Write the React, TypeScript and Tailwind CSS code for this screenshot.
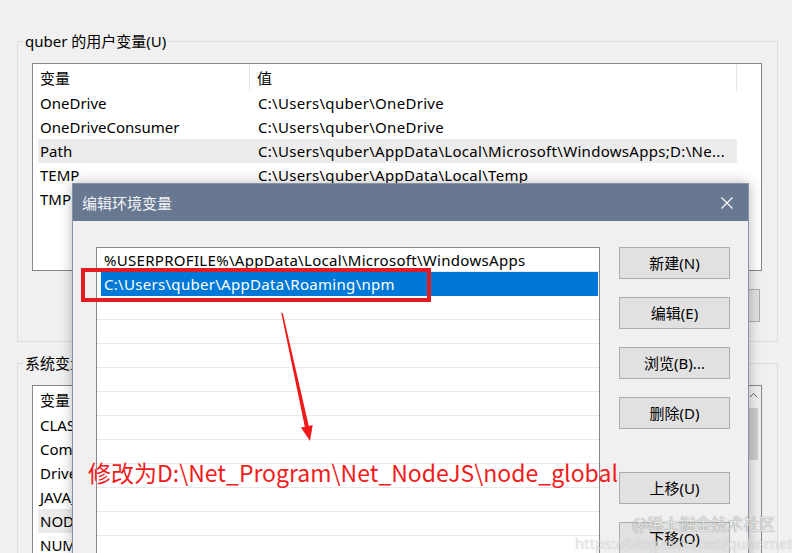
import React from 'react';

type Row = { name: string; value: string };

const USER_ROWS: Row[] = [
  { name: 'OneDrive', value: 'C:\\Users\\quber\\OneDrive' },
  { name: 'OneDriveConsumer', value: 'C:\\Users\\quber\\OneDrive' },
  { name: 'Path', value: 'C:\\Users\\quber\\AppData\\Local\\Microsoft\\WindowsApps;D:\\Ne...' },
  { name: 'TEMP', value: 'C:\\Users\\quber\\AppData\\Local\\Temp' },
  { name: 'TMP', value: 'C:\\Users\\quber\\AppData\\Local\\Temp' },
];

const SYSTEM_ROWS: Row[] = [
  { name: 'CLASSPATH', value: '.;%JAVA_HOME%\\lib' },
  { name: 'ComSpec', value: 'C:\\Windows\\system32\\cmd.exe' },
  { name: 'DriverData', value: 'C:\\Windows\\System32\\Drivers\\DriverData' },
  { name: 'JAVA_HOME', value: 'C:\\Program Files\\Java\\jdk1.8.0_271' },
  { name: 'NODE_PATH', value: 'D:\\Net_Program\\Net_NodeJS\\node_global\\node_modules' },
  { name: 'NUMBER_OF_PROCESSORS', value: '8' },
];

const PATH_ENTRIES = [
  '%USERPROFILE%\\AppData\\Local\\Microsoft\\WindowsApps',
  'C:\\Users\\quber\\AppData\\Roaming\\npm',
  '', '', '', '', '', '', '', '', '', '', '',
];

// 변수 목록 (ListView) — 헤더 + 행, 선택되지 않은 포커스 없는 행은 회색 강조
const ListView = ({
  rows,
  highlight,
  scrollbar,
  height,
}: {
  rows: Row[];
  highlight: number;
  scrollbar?: boolean;
  height: string;
}) => (
  <div className={`ml-[14px] flex w-[730px] overflow-hidden border border-[#828790] bg-white ${height}`}>
    <div className="min-w-0 flex-1">
      <div className="ml-[5px] flex h-[27px] items-stretch">
        <div className="flex w-[212px] items-center border-r border-[#e5e5e5] pl-[2px]">变量</div>
        <div className="flex w-[487px] items-center border-r border-[#e5e5e5] pl-[7px]">值</div>
      </div>
      {rows.map((row, i) => (
        <div
          key={row.name}
          className={`ml-[5px] flex h-[24px] w-[699px] items-center whitespace-nowrap ${
            i === highlight ? 'bg-[#ececec]' : ''
          }`}
        >
          <div className="w-[220px] shrink-0 pl-[2px]">{row.name}</div>
          <div className="min-w-0 flex-1 overflow-hidden tracking-[0.3px]">{row.value}</div>
        </div>
      ))}
    </div>
    {scrollbar && (
      <div className="w-[16px] shrink-0 bg-[#f0f0f0]">
        <div className="flex h-[17px] items-center justify-center">
          <svg width="9" height="6" viewBox="0 0 9 6" fill="none" stroke="#606060" strokeWidth="1">
            <path d="M1 5 L4.5 1.5 L8 5" />
          </svg>
        </div>
        <div className="mx-[3px] mt-[5px] h-[52px] bg-[#cdcdcd]" />
      </div>
    )}
  </div>
);

const BgButton = ({ label }: { label: string }) => (
  <div className="flex h-[33px] w-[110px] items-center justify-center border border-[#adadad] bg-[#e1e1e1] text-[15px]">
    {label}
  </div>
);

const DialogButton = ({ label, className = '' }: { label: string; className?: string }) => (
  <div
    className={`flex h-[32px] w-[111px] items-center justify-center border border-[#adadad] bg-[#e1e1e1] text-[15px] text-black ${className}`}
  >
    {label}
  </div>
);

export default function App() {
  return (
    <div className="relative h-[553px] w-[792px] overflow-hidden bg-[#f0f0f0] font-['Noto_Sans','Noto_Sans_CJK_SC',sans-serif] text-[15px] leading-[20px] text-black">
      {/* 배경 창: 환경 변수 */}
      <div className="pl-[17px] pt-[41px]">
        <section className="h-[301px] w-[761px] border border-[#dcdcdc]">
          <div className="-mt-[11px] ml-[5px] w-fit bg-[#f0f0f0] px-[2px]">quber 的用户变量(U)</div>
          <div className="mt-[12px]">
            <ListView rows={USER_ROWS} highlight={2} height="h-[208px]" />
          </div>
          <div className="ml-[14px] mt-[18px] flex w-[730px] justify-end gap-[10px] pr-[2px]">
            <BgButton label="新建(N)..." />
            <BgButton label="编辑(E)..." />
            <BgButton label="删除(D)" />
          </div>
        </section>

        <section className="mt-[21px] h-[260px] w-[761px] border border-[#dcdcdc]">
          <div className="-mt-[11px] ml-[5px] w-fit bg-[#f0f0f0] px-[2px]">系统变量(S)</div>
          <div className="mt-[12px]">
            <ListView rows={SYSTEM_ROWS} highlight={4} scrollbar height="h-[220px]" />
          </div>
        </section>
      </div>

      {/* 编辑环境变量 对话框 */}
      <div className="absolute left-[72px] top-[183px] h-[400px] w-[677px] border border-[#8893a3] bg-[#f0f0f0] shadow-[0_0_12px_rgba(0,0,0,0.28)]">
        <div className="flex h-[37px] items-center justify-between bg-[#687891] pl-[9px] pr-[15px] text-[#f2f4f7]">
          <span>编辑环境变量</span>
          <svg width="12" height="12" viewBox="0 0 12 12" stroke="#ffffff" strokeWidth="1.1">
            <path d="M0.5 0.5 L11.5 11.5 M11.5 0.5 L0.5 11.5" />
          </svg>
        </div>
        <div className="flex pl-[23px] pt-[26px]">
          <div className="h-[340px] w-[504px] border border-[#828790] bg-white">
            {PATH_ENTRIES.map((entry, i) => (
              <div key={i} className={`flex h-[24px] ${i === 1 ? '' : 'border-b border-[#e9e9e9]'}`}>
                <div
                  className={`ml-[4px] mr-[1px] flex flex-1 items-center whitespace-nowrap pl-[3px] tracking-[0.3px] ${
                    i === 1 ? 'bg-[#0078d7] text-white' : ''
                  }`}
                >
                  {entry}
                </div>
              </div>
            ))}
          </div>
          <div className="ml-[19px] flex flex-col">
            <DialogButton label="新建(N)" />
            <DialogButton label="编辑(E)" className="mt-[18px]" />
            <DialogButton label="浏览(B)..." className="mt-[18px]" />
            <DialogButton label="删除(D)" className="mt-[18px]" />
            <DialogButton label="上移(U)" className="mt-[43px]" />
            <DialogButton label="下移(O)" className="mt-[18px]" />
          </div>
        </div>
      </div>

      {/* 표시: 빨간 사각형, 화살표, 안내 문구 */}
      <div className="absolute left-[81px] top-[268px] h-[34px] w-[350px] border-[4px] border-[#e31b23]" />
      <svg className="absolute left-0 top-0" width="792" height="553" viewBox="0 0 792 553">
        <polygon
          points="281.3,313.2 282.7,312.8 308.8,425.9 312.7,425 310,441 300.9,427.6 304.8,426.7"
          fill="#f01a1a"
        />
      </svg>
      <div className="absolute left-[88px] top-[456px] whitespace-nowrap font-['Noto_Sans_CJK_SC',sans-serif] text-[23px] leading-[32px] text-[#f21b1b]">
        修改为D:\Net_Program\Net_NodeJS\node_global
      </div>

      {/* 워터마크 */}
      <div className="absolute left-[575px] top-[533px] whitespace-nowrap text-[15px] text-white/60 [text-shadow:0_0_1px_rgba(120,120,120,0.5)]">
        https://blog.csdn.net/qubernet
      </div>
      <div className="absolute left-[632px] top-[513px] whitespace-nowrap font-['Noto_Sans_CJK_SC',sans-serif] text-[16px] text-white/85 [text-shadow:0_0_1px_rgba(60,60,60,0.9)]">
        @稀土掘金技术社区
      </div>
    </div>
  );
}
